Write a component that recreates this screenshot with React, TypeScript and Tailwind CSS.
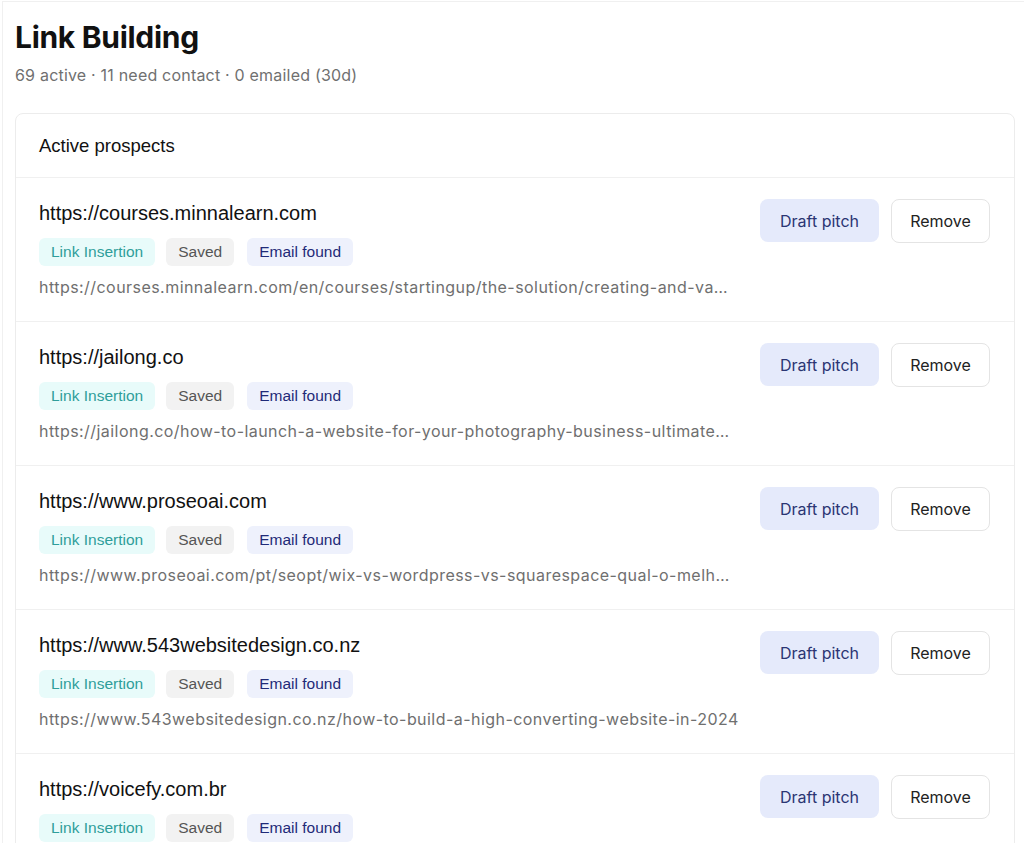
type Prospect = {
  domain: string;
  url: string;
};

const prospects: Prospect[] = [
  {
    domain: "https://courses.minnalearn.com",
    url: "https://courses.minnalearn.com/en/courses/startingup/the-solution/creating-and-va…",
  },
  {
    domain: "https://jailong.co",
    url: "https://jailong.co/how-to-launch-a-website-for-your-photography-business-ultimate…",
  },
  {
    domain: "https://www.proseoai.com",
    url: "https://www.proseoai.com/pt/seopt/wix-vs-wordpress-vs-squarespace-qual-o-melh…",
  },
  {
    domain: "https://www.543websitedesign.co.nz",
    url: "https://www.543websitedesign.co.nz/how-to-build-a-high-converting-website-in-2024",
  },
  {
    domain: "https://voicefy.com.br",
    url: "https://voicefy.com.br/blog/como-criar-um-site",
  },
];

const geo = "font-['Inter',sans-serif]";
const helv = "font-['Liberation_Sans',Arial,sans-serif]";

function ProspectRow({ p }: { p: Prospect }) {
  return (
    <div className="flex items-start justify-between border-t border-[#f0f0f0] pl-[23px] pr-6 pt-6 pb-6">
      <div className="min-w-0">
        <div className={`${helv} text-[20px] leading-[22px] text-[#111]`}>{p.domain}</div>
        <div className={`${helv} mt-[14px] flex gap-[11px] text-[15.5px]`}>
          <span className="flex h-[28px] items-center rounded-md bg-[#e8fbfa] px-[12px] text-[#2f9e9b]">
            Link Insertion
          </span>
          <span className="flex h-[28px] items-center rounded-md bg-[#f2f2f2] px-[12px] text-[#555]">
            Saved
          </span>
          <span className="ml-[2px] flex h-[28px] items-center rounded-md bg-[#eef1fc] px-[12px] text-[#1f2a78]">
            Email found
          </span>
        </div>
        <div
          className={`${geo} mt-[11px] whitespace-nowrap text-[16px] leading-[20px] tracking-[0.45px] text-[#6f6f6f]`}
        >
          {p.url}
        </div>
      </div>
      <div className={`${geo} -mt-[3px] flex shrink-0 gap-3 text-[16px]`}>
        <button className="h-[43px] w-[119px] rounded-lg bg-[#e5eafb] text-[#2b3573]">Draft pitch</button>
        <button className="h-[44px] w-[99px] rounded-lg border border-[#e4e4e4] bg-white text-[#222]">
          Remove
        </button>
      </div>
    </div>
  );
}

export default function App() {
  return (
    <div className="h-[843px] overflow-hidden bg-white">
      <div className="ml-[2px] mt-[1px] h-full border-l border-t border-[#f0f0f0] pl-[12px] pr-[9px] pt-[17px]">
        <h1 className={`${geo} text-[30px] font-bold leading-[36px] tracking-[-0.3px] text-[#111]`}>
          Link Building
        </h1>
        <p className={`${geo} mt-2 text-[16px] leading-[24px] tracking-[0.2px] text-[#707070]`}>
          69 active · 11 need contact · 0 emailed (30d)
        </p>
        <div className="mt-[26px] rounded-lg border border-[#ececec]">
          <div className={`${helv} pl-[23px] pr-6 py-5 text-[18.5px] leading-[23px] text-[#111]`}>
            Active prospects
          </div>
          {prospects.map((p) => (
            <ProspectRow key={p.domain} p={p} />
          ))}
        </div>
      </div>
    </div>
  );
}
